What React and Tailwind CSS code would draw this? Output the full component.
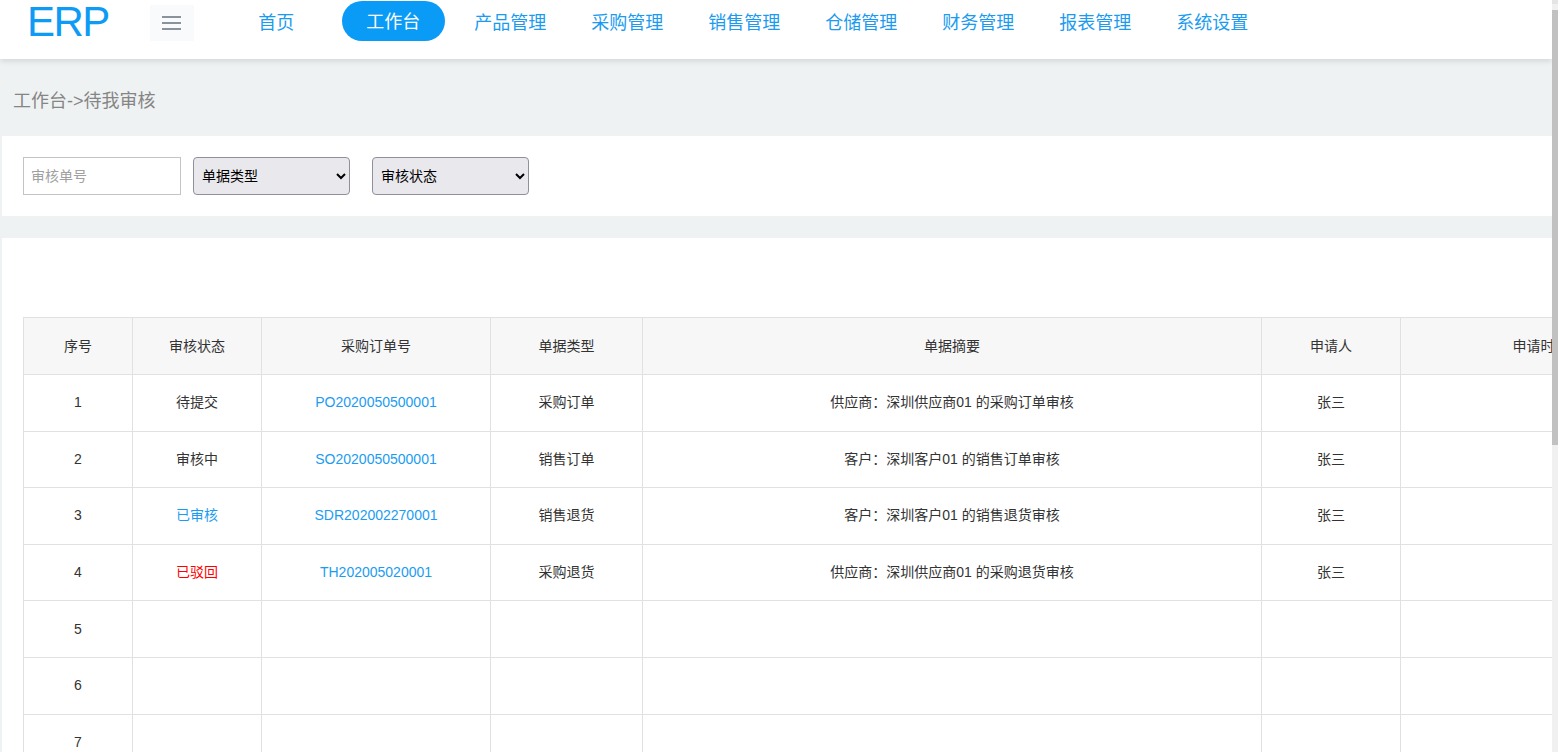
const font = { fontFamily: '"Liberation Sans", "Noto Sans CJK SC", sans-serif' }

const navItems = ['首页', '工作台', '产品管理', '采购管理', '销售管理', '仓储管理', '财务管理', '报表管理', '系统设置']

const columns = [
  { title: '序号', w: 'w-[109px]' },
  { title: '审核状态', w: 'w-[129px]' },
  { title: '采购订单号', w: 'w-[229px]' },
  { title: '单据类型', w: 'w-[152px]' },
  { title: '单据摘要', w: 'w-[619px]' },
  { title: '申请人', w: 'w-[139px]' },
  { title: '申请时间', w: 'w-[280px]' },
  { title: '操作', w: 'w-[160px]' },
]

const records = [
  { status: '待提交', statusCls: 'text-[#333]', no: 'PO2020050500001', type: '采购订单', summary: '供应商：深圳供应商01 的采购订单审核', user: '张三' },
  { status: '审核中', statusCls: 'text-[#333]', no: 'SO2020050500001', type: '销售订单', summary: '客户：深圳客户01 的销售订单审核', user: '张三' },
  { status: '已审核', statusCls: 'text-[#1a9cf2]', no: 'SDR202002270001', type: '销售退货', summary: '客户：深圳客户01 的销售退货审核', user: '张三' },
  { status: '已驳回', statusCls: 'text-[#ff0000]', no: 'TH202005020001', type: '采购退货', summary: '供应商：深圳供应商01 的采购退货审核', user: '张三' },
]

const rows = Array.from({ length: 15 }, (_, i) => records[i] || null)

function Header() {
  return (
    <header className="relative z-10 flex h-[59px] items-start bg-white shadow-[0_2px_6px_rgba(0,0,0,0.12)]">
      <div className="ml-[27px] text-[42px] leading-[44px] tracking-[-1.5px] text-[#0d9bf5]">ERP</div>
      <button
        type="button"
        className="ml-[41px] mt-[5px] flex h-[36px] w-[44px] flex-col items-center justify-center gap-[4px] bg-[#f8fafb]"
        aria-label="menu"
      >
        <span className="h-[2px] w-[19px] bg-[#8a929b]" />
        <span className="h-[2px] w-[19px] bg-[#8a929b]" />
        <span className="h-[2px] w-[19px] bg-[#8a929b]" />
      </button>
      <nav className="ml-[24px] flex">
        {navItems.map((item) =>
          item === '工作台' ? (
            <div key={item} className="flex w-[117px] justify-center">
              <span className="mt-[1px] flex h-[40px] w-[103px] items-center justify-center rounded-full bg-[#0a9bf7] pt-[2px] text-[18px] text-white">
                {item}
              </span>
            </div>
          ) : (
            <div key={item} className="flex h-[43px] w-[117px] items-center justify-center pt-[3px] text-[18px] text-[#1a9bf0]">
              {item}
            </div>
          )
        )}
      </nav>
    </header>
  )
}

export default function App() {
  return (
    <div style={font} className="flex h-[752px] overflow-hidden bg-[#eff2f3]">
      <div className="w-[1552px] shrink-0 overflow-hidden">
        <Header />

        <main className="pl-[2px]">
          {/* Breadcrumb */}
          <div className="pl-[11px] pt-[30px] pb-[23px] text-[18px] leading-[24px] text-[#858585]">工作台-&gt;待我审核</div>

          {/* Filters */}
          <section className="flex items-center bg-white px-[21px] py-[21px]">
            <input
              type="text"
              placeholder="审核单号"
              className="h-[38px] w-[158px] border border-[#c4c4c4] px-[7px] text-[14px] placeholder:text-[#a0a0a0]"
            />
            <select className="ml-[12px] h-[38px] w-[157px] rounded-[4px] border border-[#8f8f9d] bg-[#e9e9ed] px-[4px] text-[14px] text-black">
              <option>单据类型</option>
            </select>
            <select className="ml-[22px] h-[38px] w-[157px] rounded-[4px] border border-[#8f8f9d] bg-[#e9e9ed] px-[4px] text-[14px] text-black">
              <option>审核状态</option>
            </select>
          </section>

          {/* Table */}
          <section className="mt-[22px] overflow-hidden bg-white pl-[21px] pt-[79px] pb-[76px]">
            <table className="w-[1817px] min-w-[1817px] table-fixed border-collapse text-[14px] text-[#333]">
              <thead>
                <tr className="h-[57px] bg-[#f7f7f7]">
                  {columns.map((c) => (
                    <th key={c.title} className={`${c.w} border border-[#e0e1e3] text-center font-normal`}>
                      {c.title}
                    </th>
                  ))}
                </tr>
              </thead>
              <tbody>
                {rows.map((r, i) => (
                  <tr key={i} className="h-[56.6px]">
                    <td className="border border-[#e0e1e3] text-center">{i + 1}</td>
                    <td className={`border border-[#e0e1e3] text-center ${r ? r.statusCls : ''}`}>{r?.status}</td>
                    <td className="border border-[#e0e1e3] text-center text-[#1a9cf2]">{r?.no}</td>
                    <td className="border border-[#e0e1e3] text-center">{r?.type}</td>
                    <td className="border border-[#e0e1e3] text-center">{r?.summary}</td>
                    <td className="border border-[#e0e1e3] text-center">{r?.user}</td>
                    <td className="border border-[#e0e1e3] text-center" />
                    <td className="border border-[#e0e1e3] text-center" />
                  </tr>
                ))}
              </tbody>
            </table>
          </section>
        </main>
      </div>

      {/* Scrollbar */}
      <div className="flex w-[6px] shrink-0 flex-col bg-[#f0f0f0]">
        <div className="h-[4px] bg-[#e4e4e4]" />
        <div className="mt-[6px] h-[435px] bg-[#c1c1c1]" />
      </div>
    </div>
  )
}
